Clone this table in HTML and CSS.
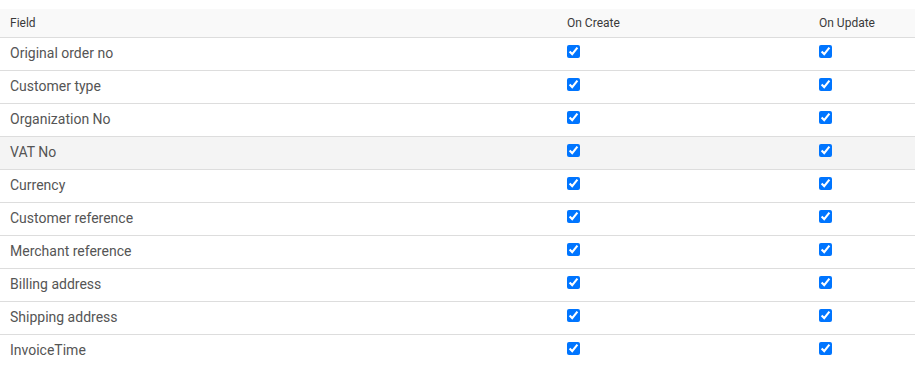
FILE: index.html
```html
<!DOCTYPE html>
<html lang="en">
<head>
    <meta charset="UTF-8">
    <title>Field permissions</title>
    <link rel="stylesheet" href="styles.css">
</head>
<body>
    <table class="fields">
        <colgroup>
            <col class="col-field">
            <col class="col-create">
            <col class="col-update">
        </colgroup>
        <thead>
            <tr>
                <th>Field</th>
                <th>On Create</th>
                <th>On Update</th>
            </tr>
        </thead>
        <tbody>
            <tr>
                <td>Original order no</td>
                <td><input type="checkbox" checked></td>
                <td><input type="checkbox" checked></td>
            </tr>
            <tr>
                <td>Customer type</td>
                <td><input type="checkbox" checked></td>
                <td><input type="checkbox" checked></td>
            </tr>
            <tr>
                <td>Organization No</td>
                <td><input type="checkbox" checked></td>
                <td><input type="checkbox" checked></td>
            </tr>
            <tr class="hover">
                <td>VAT No</td>
                <td><input type="checkbox" checked></td>
                <td><input type="checkbox" checked></td>
            </tr>
            <tr>
                <td>Currency</td>
                <td><input type="checkbox" checked></td>
                <td><input type="checkbox" checked></td>
            </tr>
            <tr>
                <td>Customer reference</td>
                <td><input type="checkbox" checked></td>
                <td><input type="checkbox" checked></td>
            </tr>
            <tr>
                <td>Merchant reference</td>
                <td><input type="checkbox" checked></td>
                <td><input type="checkbox" checked></td>
            </tr>
            <tr>
                <td>Billing address</td>
                <td><input type="checkbox" checked></td>
                <td><input type="checkbox" checked></td>
            </tr>
            <tr>
                <td>Shipping address</td>
                <td><input type="checkbox" checked></td>
                <td><input type="checkbox" checked></td>
            </tr>
            <tr>
                <td>InvoiceTime</td>
                <td><input type="checkbox" checked></td>
                <td><input type="checkbox" checked></td>
            </tr>
        </tbody>
    </table>
</body>
</html>
```

FILE: styles.css
```css
* {
    margin: 0;
    padding: 0;
    box-sizing: border-box;
}

body {
    font-family: Roboto, sans-serif;
    background: #fff;
    padding-top: 9px;
}

.fields {
    width: 915px;
    border-collapse: collapse;
    table-layout: fixed;
}

.col-field {
    width: 557px;
}

.col-create {
    width: 252px;
}

.col-update {
    width: 106px;
}

.fields th {
    background: #f9f9f9;
    color: #3a3a3a;
    font-size: 12px;
    font-weight: 400;
    text-align: left;
    height: 28px;
    padding: 0 10px;
    border-bottom: 1px solid #ddd;
    vertical-align: middle;
}

.fields td {
    color: #555;
    font-size: 14px;
    height: 33px;
    padding: 0 10px 2px;
    border-bottom: 1px solid #ddd;
    vertical-align: middle;
}

.fields tbody tr:last-child td {
    border-bottom: none;
}

.fields tr.hover td {
    background: #f4f4f4;
}

.fields input[type="checkbox"] {
    display: block;
    width: 13px;
    height: 13px;
    margin: 0 0 3px;
}
```
